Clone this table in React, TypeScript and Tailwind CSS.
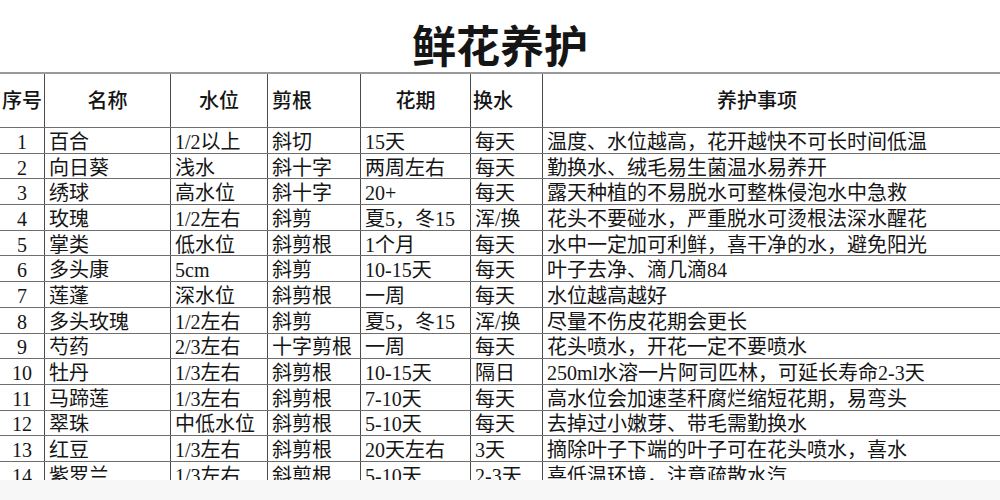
const rows: string[][] = [
  ["1", "百合", "1/2以上", "斜切", "15天", "每天", "温度、水位越高，花开越快不可长时间低温"],
  ["2", "向日葵", "浅水", "斜十字", "两周左右", "每天", "勤换水、绒毛易生菌温水易养开"],
  ["3", "绣球", "高水位", "斜十字", "20+", "每天", "露天种植的不易脱水可整株侵泡水中急救"],
  ["4", "玫瑰", "1/2左右", "斜剪", "夏5，冬15", "浑/换", "花头不要碰水，严重脱水可烫根法深水醒花"],
  ["5", "掌类", "低水位", "斜剪根", "1个月", "每天", "水中一定加可利鲜，喜干净的水，避免阳光"],
  ["6", "多头康", "5cm", "斜剪", "10-15天", "每天", "叶子去净、滴几滴84"],
  ["7", "莲蓬", "深水位", "斜剪根", "一周", "每天", "水位越高越好"],
  ["8", "多头玫瑰", "1/2左右", "斜剪", "夏5，冬15", "浑/换", "尽量不伤皮花期会更长"],
  ["9", "芍药", "2/3左右", "十字剪根", "一周", "每天", "花头喷水，开花一定不要喷水"],
  ["10", "牡丹", "1/3左右", "斜剪根", "10-15天", "隔日", "250ml水溶一片阿司匹林，可延长寿命2-3天"],
  ["11", "马蹄莲", "1/3左右", "斜剪根", "7-10天", "每天", "高水位会加速茎秆腐烂缩短花期，易弯头"],
  ["12", "翠珠", "中低水位", "斜剪根", "5-10天", "每天", "去掉过小嫩芽、带毛需勤换水"],
  ["13", "红豆", "1/3左右", "斜剪根", "20天左右", "3天", "摘除叶子下端的叶子可在花头喷水，喜水"],
  ["14", "紫罗兰", "1/3左右", "斜剪根", "5-10天", "2-3天", "喜低温环境，注意疏散水汽"],
];

const grid = "grid grid-cols-[45px_126px_97px_93px_110px_72px_457px]";
const cell = "flex items-center border-r border-[#4a4a4a] leading-none";

export default function App() {
  return (
    <div
      className="w-[1000px] h-[500px] bg-[#f7f7f7] text-[#151515] overflow-hidden"
      style={{ fontFamily: '"Liberation Serif", "Noto Sans CJK SC", serif' }}
    >
      <div className="h-[480px] bg-white overflow-hidden">
        <div className="h-[72px] pt-[27px] text-center text-[44px] leading-none font-bold">
          鲜花养护
        </div>
        <div className="border-t-2 border-[#9a9a9a]">
          <div className={`${grid} h-[54px] border-b border-[#6e6e6e] text-[20px] font-medium`}>
            <div className={`${cell} justify-center whitespace-nowrap`}>序号</div>
            <div className={`${cell} justify-center`}>名称</div>
            <div className={`${cell} justify-center`}>水位</div>
            <div className={`${cell} pl-[4px]`}>剪根</div>
            <div className={`${cell} justify-center`}>花期</div>
            <div className={`${cell} pl-[2px]`}>换水</div>
            <div className="flex items-center pl-[174px] leading-none">养护事项</div>
          </div>
          {rows.map((r) => (
            <div key={r[0]} className={`${grid} h-[25.7px] border-b border-[#6e6e6e] text-[20px]`}>
              <div className={`${cell} justify-center pt-[3px]`}>{r[0]}</div>
              {r.slice(1, 6).map((t, i) => (
                <div key={i} className={`${cell} pl-[4px] pt-[3px] whitespace-nowrap overflow-hidden`}>
                  {t}
                </div>
              ))}
              <div className="flex items-center pl-[4px] pt-[3px] leading-none whitespace-nowrap">{r[6]}</div>
            </div>
          ))}
        </div>
      </div>
    </div>
  );
}
